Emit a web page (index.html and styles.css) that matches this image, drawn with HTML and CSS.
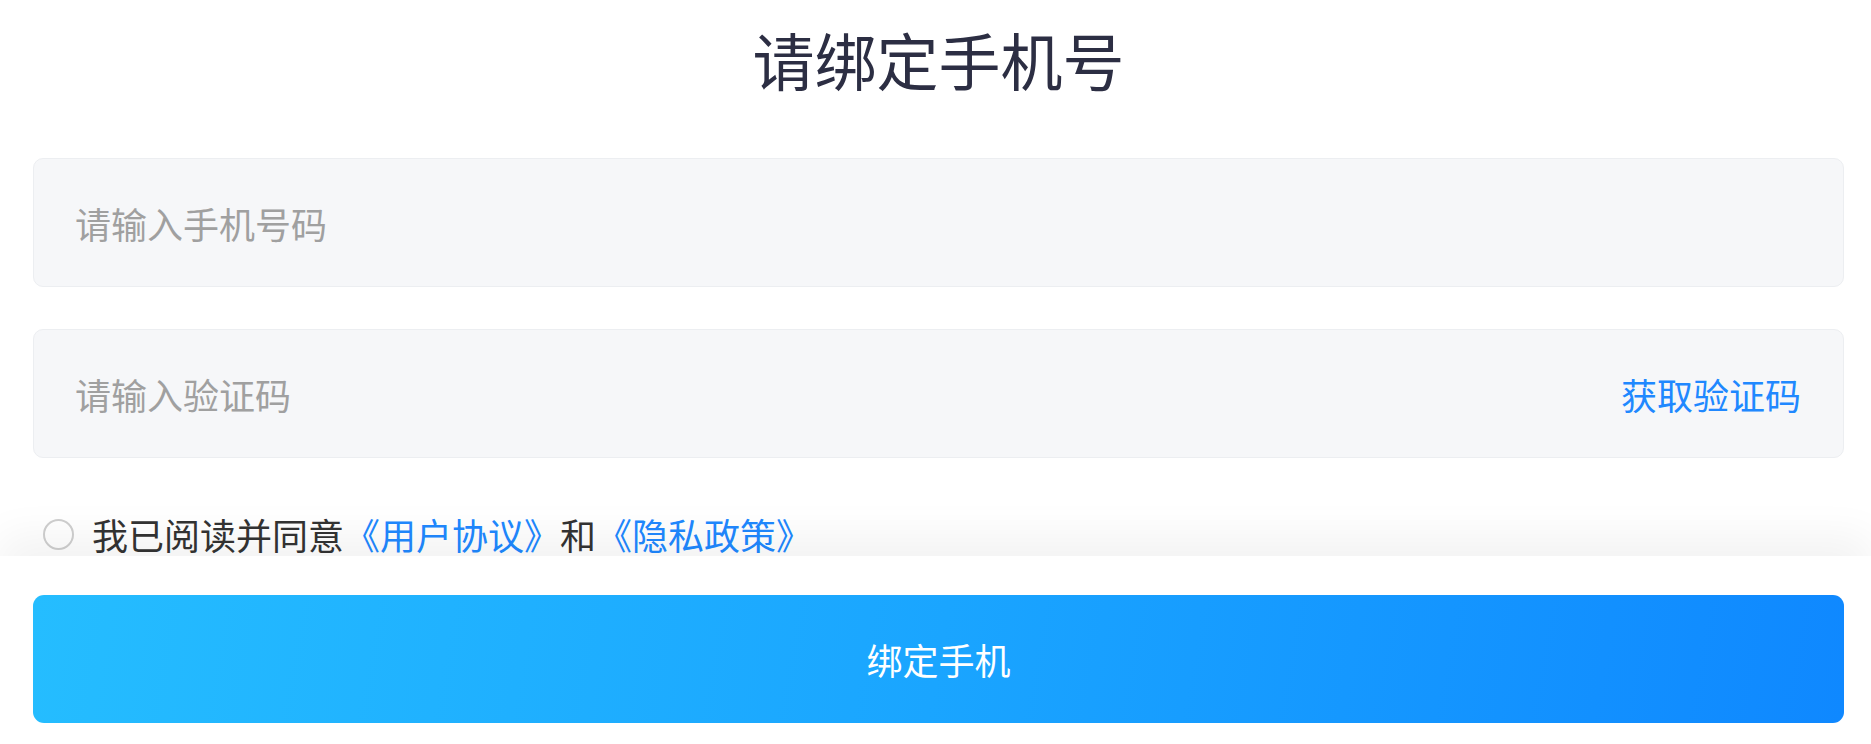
FILE: index.html
```html
<!DOCTYPE html>
<html lang="zh-CN">
<head>
<meta charset="utf-8">
<title>请绑定手机号</title>
<link rel="stylesheet" href="styles.css">
</head>
<body>
<main class="page">
  <h1 class="title">请绑定手机号</h1>
  <form class="form">
    <div class="field">
      <input class="field-input" type="text" placeholder="请输入手机号码">
    </div>
    <div class="field">
      <input class="field-input" type="text" placeholder="请输入验证码">
      <span class="code-btn">获取验证码</span>
    </div>
    <label class="agree">
      <span class="radio"></span>
      <span class="agree-text">我已阅读并同意<a class="link">《用户协议》</a>和<a class="link">《隐私政策》</a></span>
    </label>
  </form>
  <footer class="bottom-bar">
    <button class="submit" type="button">绑定手机</button>
  </footer>
</main>
</body>
</html>
```
FILE: styles.css
```css
* {
  box-sizing: border-box;
}

html, body {
  margin: 0;
  padding: 0;
  background: #ffffff;
}

body {
  font-family: "Noto Sans CJK SC", "Noto Sans", sans-serif;
}

.page {
  height: 100vh;
  display: flex;
  flex-direction: column;
  overflow: hidden;
}

.title {
  margin: 16px 0 0;
  font-size: 62px;
  line-height: 86px;
  font-weight: 400;
  color: #2c2e43;
  text-align: center;
  padding-left: 6px;
}

.form {
  display: flex;
  flex-direction: column;
  gap: 42px;
  margin-top: 56px;
  padding: 0 27px 0 33px;
}

.field {
  height: 129px;
  display: flex;
  align-items: center;
  padding: 0 42px 0 41px;
  background: #f6f7f9;
  border: 1px solid #eceef1;
  border-radius: 10px;
}

.field-input {
  flex: 1;
  min-width: 0;
  border: 0;
  outline: 0;
  background: transparent;
  font-family: inherit;
  font-size: 36px;
  color: #333333;
  padding: 0;
}

.field-input::placeholder {
  color: #a0a0a0;
}

.code-btn {
  font-size: 36px;
  color: #2088ff;
  white-space: nowrap;
}

.agree {
  display: flex;
  align-items: center;
  height: 40px;
  margin-top: 14px;
  padding-left: 10px;
}

.radio {
  width: 31px;
  height: 31px;
  border: 2px solid #cfcfcf;
  border-radius: 50%;
  background: #ffffff;
  flex: none;
}

.agree-text {
  margin-left: 18px;
  font-size: 36px;
  color: #333333;
  white-space: nowrap;
}

.link {
  color: #2088ff;
}

.bottom-bar {
  margin-top: auto;
  padding: 39px 27px 21px 33px;
  background: #ffffff;
  box-shadow: 0 -20px 40px rgba(0, 0, 0, 0.05);
}

.submit {
  display: block;
  width: 100%;
  height: 128px;
  border: 0;
  border-radius: 11px;
  background: linear-gradient(100deg, #25bdff 0%, #1aa5ff 50%, #0f88ff 100%);
  color: #ffffff;
  font-family: inherit;
  font-size: 36px;
  cursor: pointer;
}
```
